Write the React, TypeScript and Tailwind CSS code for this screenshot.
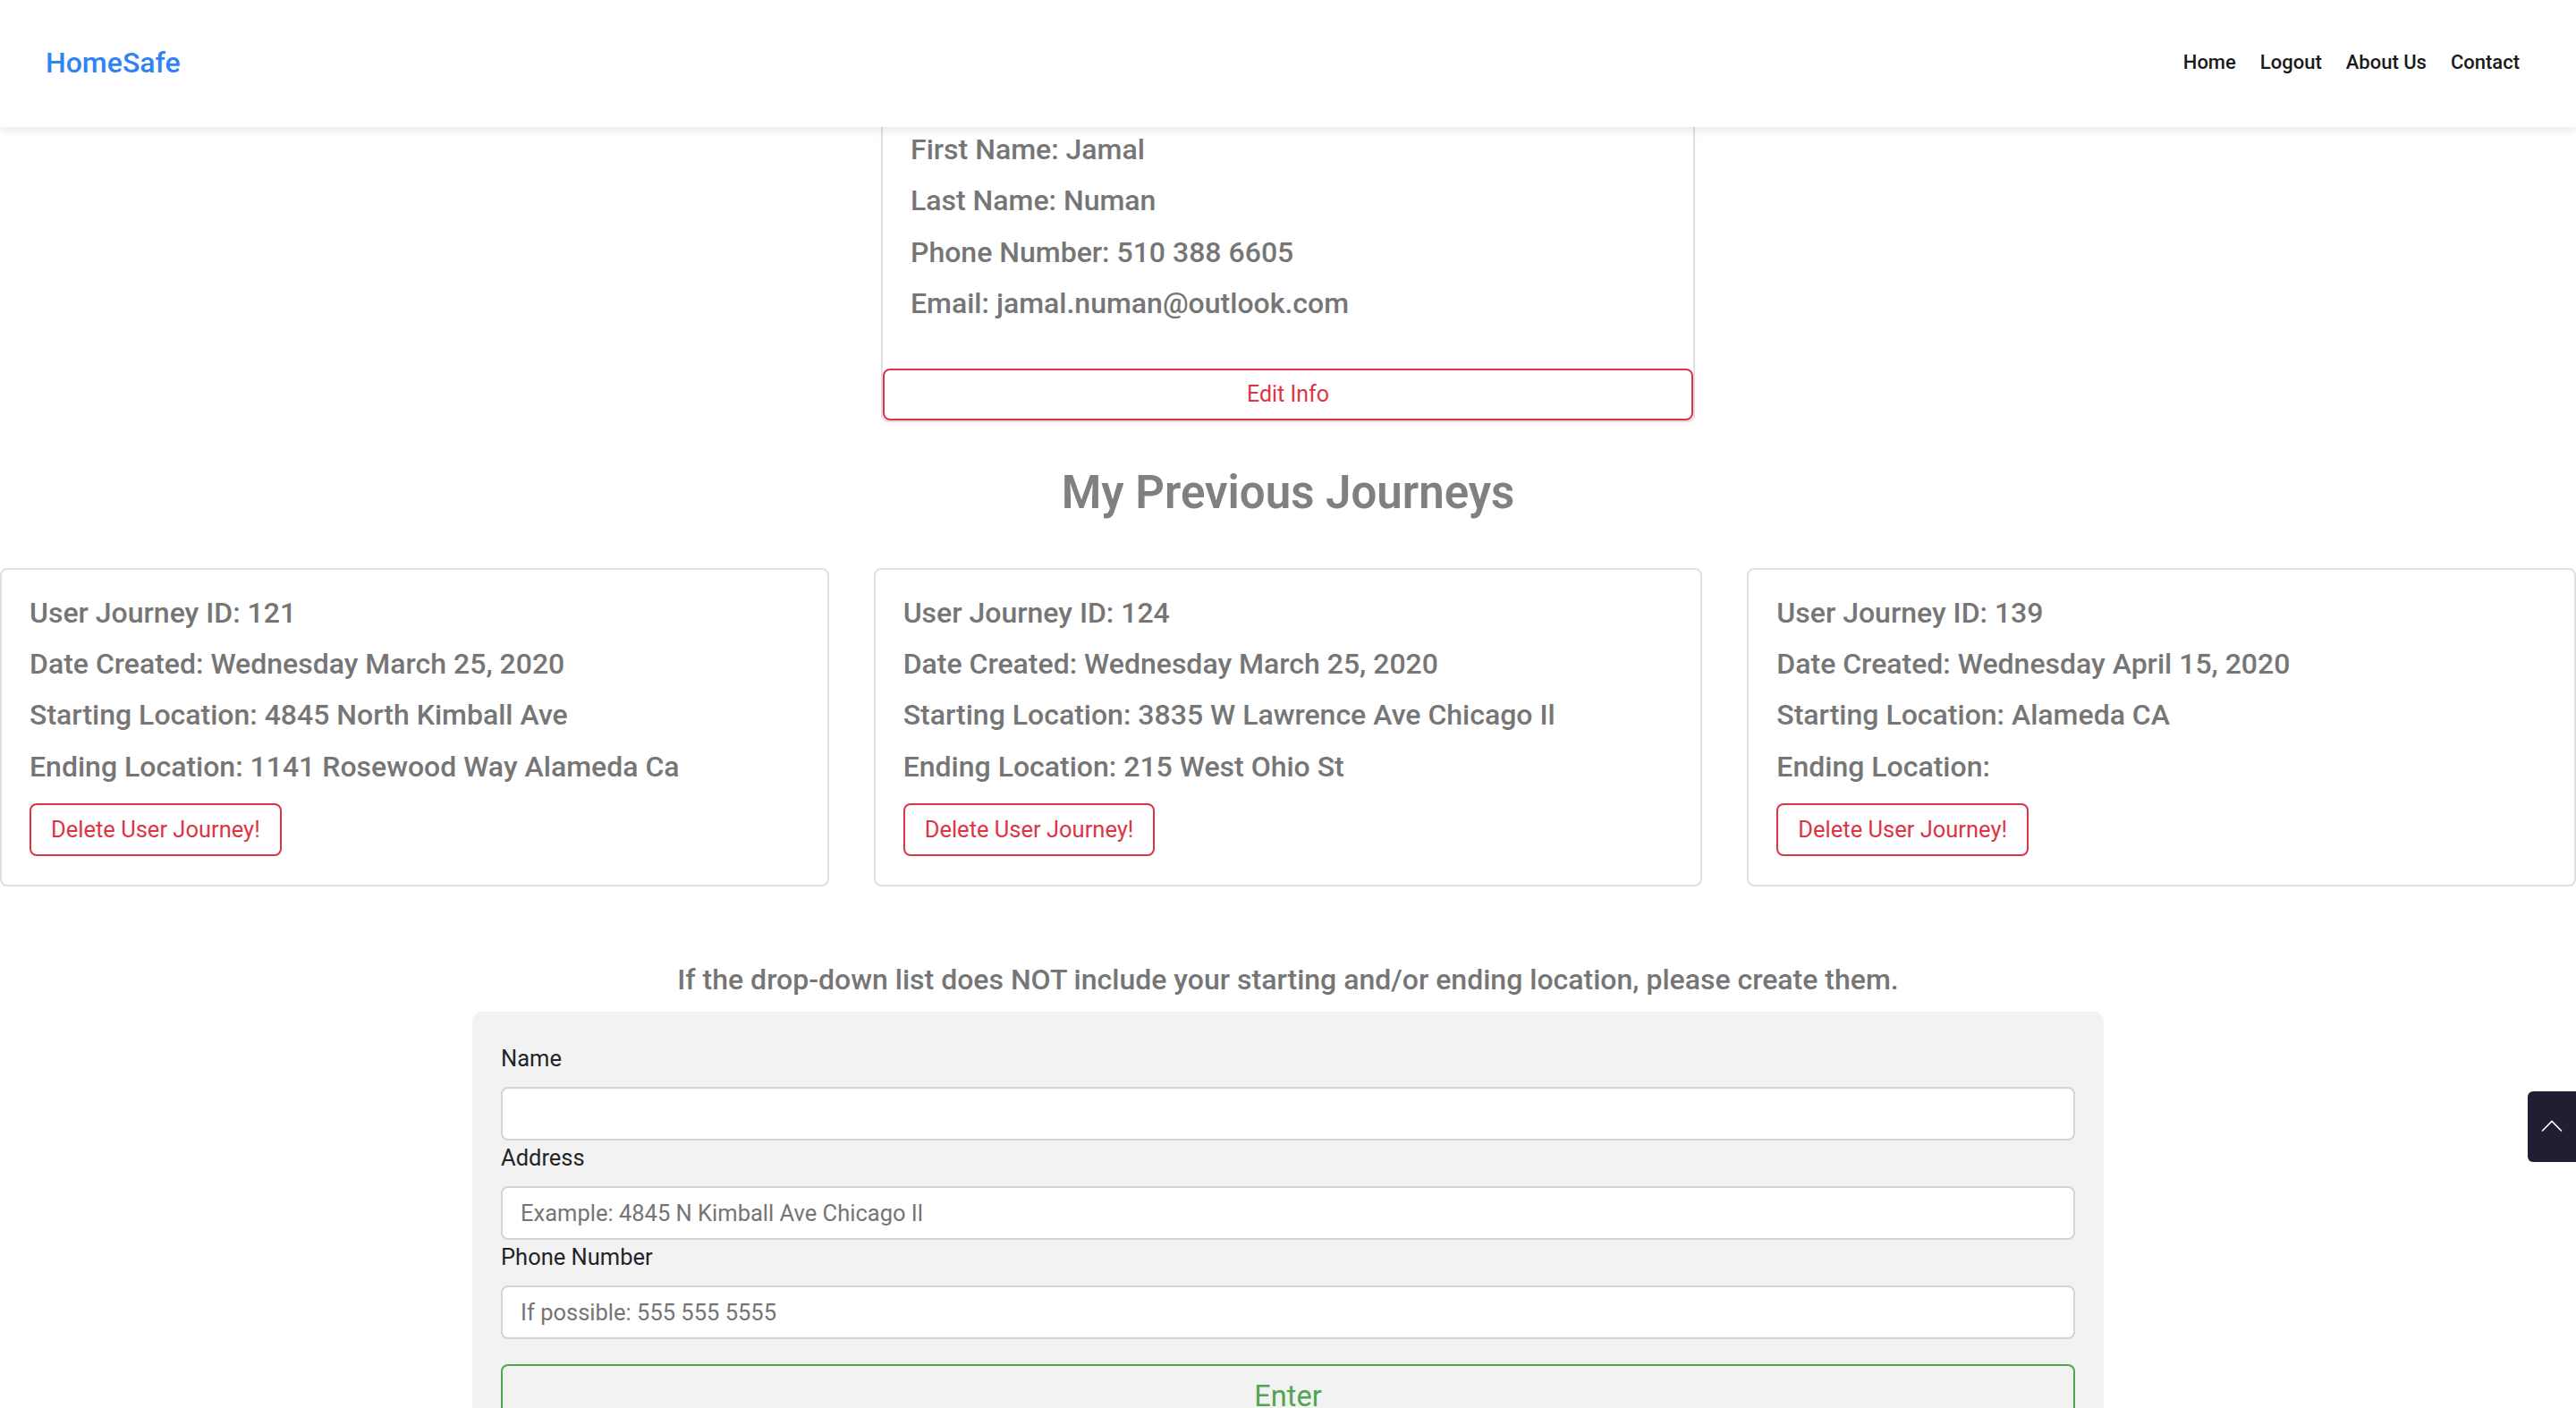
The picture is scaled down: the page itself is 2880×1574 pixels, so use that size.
import React from 'react';

interface Journey {
    id: number;
    created: string;
    start: string;
    end: string;
}

const journeys: Journey[] = [
    { id: 121, created: 'Wednesday March 25, 2020', start: '4845 North Kimball Ave', end: '1141 Rosewood Way Alameda Ca' },
    { id: 124, created: 'Wednesday March 25, 2020', start: '3835 W Lawrence Ave Chicago Il', end: '215 West Ohio St' },
    { id: 139, created: 'Wednesday April 15, 2020', start: 'Alameda CA', end: '' },
];

const navLinks = ['Home', 'Logout', 'About Us', 'Contact'];

const Line: React.FC<{ children: React.ReactNode }> = ({ children }) => (
    <p className="text-[32px] leading-[38px] font-medium text-[#767676] whitespace-nowrap">{children}</p>
);

const FormField: React.FC<{ label: string; placeholder?: string }> = ({ label, placeholder }) => (
    <div className="mb-[1px]">
        <label className="block text-[25.5px] leading-[36px] text-[#212529] mb-[14px]">{label}</label>
        <input
            type="text"
            placeholder={placeholder}
            className="block w-full h-[60px] rounded-[8px] border-2 border-[#ced4da] bg-white px-[20px] text-[25.5px] text-[#495057] placeholder:text-[#757575] outline-none"
        />
    </div>
);

export default function App() {
    return (
        <div className="min-h-screen bg-white font-[family-name:Roboto,sans-serif]">
            <nav className="relative z-10 flex h-[142px] items-center justify-between bg-white pl-[51px] pr-[63px] pb-[3px] shadow-[0_4px_10px_rgba(0,0,0,0.09)]">
                <span className="text-[32px] font-medium text-[#3182f6]">HomeSafe</span>
                <ul className="flex items-center gap-[27px]">
                    {navLinks.map((link) => (
                        <li key={link} className="text-[22px] font-medium text-[#1a1a1a]">
                            {link}
                        </li>
                    ))}
                </ul>
            </nav>

            <section className="mx-auto w-[910px] rounded-b-[8px] border-x-2 border-b-2 border-[#e0e0e0] shadow-[0_2px_4px_rgba(0,0,0,0.04)]">
                <div className="flex flex-col gap-[19.3px] px-[31px] pt-[6px] pb-[54px]">
                    <Line>First Name: Jamal</Line>
                    <Line>Last Name: Numan</Line>
                    <Line>Phone Number: 510 388 6605</Line>
                    <Line>Email: jamal.numan@outlook.com</Line>
                </div>
                <button className="block h-[58px] w-full rounded-[8px] border-2 border-[#dc3545] bg-white text-[25px] text-[#dc3545]">
                    Edit Info
                </button>
            </section>

            <h2 className="mt-[47px] text-center text-[51px] leading-[64px] font-semibold text-[#808080]">My Previous Journeys</h2>

            <div className="mt-[52px] grid grid-cols-3 gap-[50px]">
                {journeys.map((j) => (
                    <div key={j.id} className="rounded-[8px] border-2 border-[#e0e0e0] px-[31px] pt-[29px] pb-[32px]">
                        <div className="flex flex-col gap-[19.3px]">
                            <Line>User Journey ID: {j.id}</Line>
                            <Line>Date Created: {j.created}</Line>
                            <Line>Starting Location: {j.start}</Line>
                            <Line>Ending Location: {j.end}</Line>
                        </div>
                        <button className="mt-[22px] h-[59px] rounded-[8px] border-2 border-[#dc3545] bg-white px-[22px] text-[25.5px] text-[#dc3545]">
                            Delete User Journey!
                        </button>
                    </div>
                ))}
            </div>

            <p className="mt-[84px] text-center text-[32px] leading-[40px] font-medium text-[#767676]">
                If the drop-down list does NOT include your starting and/or ending location, please create them.
            </p>

            <form className="mx-auto mt-[16px] w-[1824px] rounded-[10px] bg-[#f2f2f2] px-[32px] pt-[34px] pb-[40px]">
                <FormField label="Name" />
                <FormField label="Address" placeholder="Example: 4845 N Kimball Ave Chicago Il" />
                <FormField label="Phone Number" placeholder="If possible: 555 555 5555" />
                <button
                    type="button"
                    className="mt-[28px] block w-full rounded-[8px] border-2 border-[#51a551] py-[12px] text-[32.5px] leading-[45px] text-[#51a551]"
                >
                    Enter
                </button>
            </form>

            <button className="fixed right-0 top-[1220px] flex h-[79px] w-[54px] items-center justify-center rounded-l-[6px] bg-[#1f1e33]">
                <svg width="26" height="14" viewBox="0 0 26 14" fill="none" className="-mt-[2px]">
                    <polyline points="2,12.5 13,1.5 24,12.5" stroke="white" strokeWidth="1.6" />
                </svg>
            </button>
        </div>
    );
}
